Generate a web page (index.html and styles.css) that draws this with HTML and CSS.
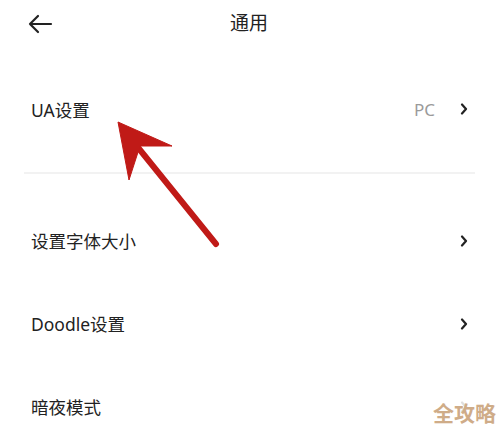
FILE: index.html
```html
<!DOCTYPE html>
<html lang="zh">
<head>
<meta charset="utf-8">
<link rel="stylesheet" href="styles.css">
</head>
<body>
<div class="page">
  <header class="header">
    <svg class="back" width="26" height="20" viewBox="0 0 26 20"><path d="M24 10H3M11 2L3 10l8 8" fill="none" stroke="#222" stroke-width="2.2" stroke-linecap="round" stroke-linejoin="round"/></svg>
    <div class="title">通用</div>
  </header>
  <section class="group first">
    <div class="row tall">
      <span class="label">UA设置</span>
      <span class="value">PC</span>
      <svg class="chev" width="8" height="12" viewBox="0 0 8 12"><path d="M2 1.5L6 6l-4 4.5" fill="none" stroke="#222" stroke-width="2.2" stroke-linecap="round" stroke-linejoin="round"/></svg>
    </div>
  </section>
  <div class="divider"></div>
  <section class="group">
    <div class="row">
      <span class="label">设置字体大小</span>
      <svg class="chev" width="8" height="12" viewBox="0 0 8 12"><path d="M2 1.5L6 6l-4 4.5" fill="none" stroke="#222" stroke-width="2.2" stroke-linecap="round" stroke-linejoin="round"/></svg>
    </div>
    <div class="row">
      <span class="label">Doodle设置</span>
      <svg class="chev" width="8" height="12" viewBox="0 0 8 12"><path d="M2 1.5L6 6l-4 4.5" fill="none" stroke="#222" stroke-width="2.2" stroke-linecap="round" stroke-linejoin="round"/></svg>
    </div>
    <div class="row">
      <span class="label">暗夜模式</span>
      <svg class="chev" width="8" height="12" viewBox="0 0 8 12"><path d="M2 1.5L6 6l-4 4.5" fill="none" stroke="#222" stroke-width="2.2" stroke-linecap="round" stroke-linejoin="round"/></svg>
    </div>
  </section>
  <svg class="pointer" width="500" height="434" viewBox="0 0 500 434">
    <line x1="216" y1="244" x2="136" y2="145" stroke="#c01a17" stroke-width="6" stroke-linecap="round"/>
    <polygon points="118,122 172,146 140,146 129,180" fill="#c01a17" stroke="#c01a17" stroke-width="1" stroke-linejoin="round"/>
  </svg>
  <div class="watermark">全攻略</div>
</div>
</body>
</html>
```
FILE: styles.css
```css
html, body {
  margin: 0;
  padding: 0;
  background: #fff;
}
.page {
  position: relative;
  width: 500px;
  height: 434px;
  overflow: hidden;
  font-family: "Noto Sans", "Noto Sans CJK SC", sans-serif;
  color: #222;
}
.header {
  position: relative;
  height: 48px;
  display: flex;
  align-items: center;
  justify-content: center;
}
.back {
  position: absolute;
  left: 27px;
  top: 14px;
}
.title {
  font-size: 19px;
  line-height: 1;
  margin-left: -2px;
  margin-top: -2px;
}
.group.first {
  padding-top: 19px;
}
.row {
  height: 83px;
  display: flex;
  align-items: center;
  padding: 0 32px 0 31px;
  font-size: 17.5px;
}
.row.tall {
  height: 84px;
}
.label {
  flex: 1;
}
.value {
  color: #9a9a9a;
  margin-right: 25px;
  font-size: 17px;
}
.chev {
  display: block;
}
.divider {
  margin: 21px 25px 25px 24px;
  height: 2px;
  background: #f2f2f2;
}
.pointer {
  position: absolute;
  left: 0;
  top: 0;
}
.watermark {
  position: absolute;
  left: 430px;
  top: 398px;
  padding: 0 3px;
  font-size: 21px;
  font-weight: 700;
  color: #cfac88;
  background: rgba(255, 255, 255, 0.85);
  line-height: 30px;
}
```
